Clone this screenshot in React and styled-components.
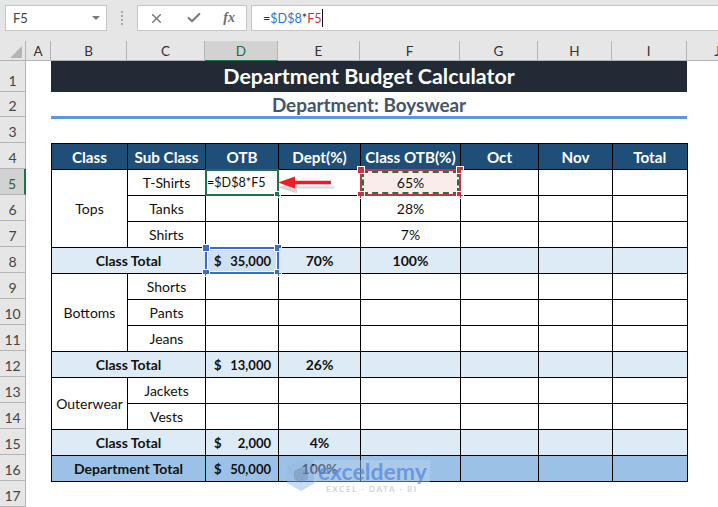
import React from "react";
import styled, { createGlobalStyle } from "styled-components";
import { X, Check } from "lucide-react";

const Global = createGlobalStyle`
  html, body { margin: 0; padding: 0; background: #fff; }
  body { font-family: Lato, "Open Sans", sans-serif; }
`;

const Page = styled.div`
  width: 718px;
  height: 507px;
  overflow: hidden;
  position: relative;
  background: #fff;
`;

const Toolbar = styled.div`
  height: 41px;
  background: #e6e6e6;
  display: flex;
  align-items: flex-start;
  padding-top: 5px;
  box-sizing: border-box;
`;

const NameBox = styled.div`
  width: 102px;
  height: 26px;
  margin-left: 5px;
  box-sizing: border-box;
  background: #fff;
  border: 1px solid #c6c6c6;
  display: flex;
  align-items: center;
  justify-content: space-between;
  padding: 0 6px 0 7px;
  font-size: 13px;
  color: #444;
`;

const Caret = styled.span`
  width: 0;
  height: 0;
  border-left: 4px solid transparent;
  border-right: 4px solid transparent;
  border-top: 4px solid #7a7a7a;
`;

const Grip = styled.div`
  width: 30px;
  height: 26px;
  display: flex;
  flex-direction: column;
  align-items: center;
  justify-content: center;
  gap: 2px;
  span { width: 2px; height: 2px; background: #a8a8a8; }
`;

const FxBox = styled.div`
  width: 110px;
  height: 26px;
  box-sizing: border-box;
  background: #fff;
  border: 1px solid #c6c6c6;
  display: flex;
  align-items: center;
  justify-content: space-between;
  padding: 0 11px 0 11px;
  color: #7d7d7d;
`;

const FxLabel = styled.span`
  font-family: "Liberation Serif", serif;
  font-style: italic;
  font-weight: bold;
  font-size: 14px;
  color: #6e6e6e;
`;

const FormulaBar = styled.div`
  flex: 1;
  height: 26px;
  margin-left: 4px;
  box-sizing: border-box;
  background: #fff;
  border: 1px solid #c6c6c6;
  border-right: none;
  display: flex;
  align-items: center;
  padding-left: 11px;
  font-size: 12.6px;
  color: #333;
`;

const Ref = styled.span`
  color: ${(p) => p.$color};
`;

const TextCaret = styled.span`
  width: 1px;
  height: 18px;
  background: #111;
`;

const ColumnBar = styled.div`
  height: 20px;
  background: #e6e6e6;
  display: flex;
  box-sizing: border-box;
  border-bottom: 1px solid #b4b4b4;
`;

const Corner = styled.div`
  flex: none;
  width: 26px;
  display: flex;
  align-items: flex-end;
  justify-content: flex-end;
  padding: 0 3px 2px 0;
  box-sizing: border-box;
  border-right: 1px solid #b4b4b4;
  svg { display: block; }
`;

const ColHead = styled.div`
  flex: none;
  width: ${(p) => p.$w}px;
  box-sizing: border-box;
  display: flex;
  align-items: center;
  justify-content: center;
  font-size: 13.5px;
  color: ${(p) => (p.$on ? "#1f6b41" : "#333")};
  background: ${(p) => (p.$on ? "#d2d2d2" : "transparent")};
  border-right: 1px solid #b4b4b4;
  box-shadow: ${(p) => (p.$on ? "0 1px 0 #217346" : "none")};
`;

const Body = styled.div`
  display: flex;
`;

const RowRail = styled.div`
  width: 26px;
  flex: none;
  background: #e6e6e6;
  border-right: 1px solid #b4b4b4;
  box-sizing: border-box;
`;

const RowHead = styled.div`
  height: ${(p) => p.$h}px;
  box-sizing: border-box;
  display: flex;
  align-items: flex-end;
  justify-content: center;
  padding-bottom: 2px;
  font-size: 14px;
  line-height: 17px;
  color: ${(p) => (p.$on ? "#1f6b41" : "#444")};
  background: ${(p) => (p.$on ? "#d2d2d2" : "transparent")};
  border-bottom: 1px solid #b4b4b4;
  border-right: ${(p) => (p.$on ? "2px solid #217346" : "none")};
  margin-right: ${(p) => (p.$on ? "-1px" : "0")};
`;

const Canvas = styled.div`
  padding-left: 25px;
  width: 636px;
`;

const Title = styled.div`
  height: 31px;
  box-sizing: border-box;
  padding-bottom: 2px;
  background: #222b35;
  color: #fff;
  font-weight: 700;
  font-size: 21.4px;
  display: flex;
  align-items: center;
  justify-content: center;
`;

const Subtitle = styled.div`
  height: 27px;
  box-sizing: border-box;
  border-bottom: 3px solid #5b9bd5;
  color: #44546a;
  font-weight: 700;
  font-size: 18.9px;
  display: flex;
  align-items: center;
  justify-content: center;
`;

const Budget = styled.table`
  margin-top: 24px;
  border-collapse: collapse;
  table-layout: fixed;
  width: 635px;
  font-size: 14px;
  color: #111;
  td, th {
    border: 1px solid #000;
    height: 26px;
    padding: 0;
    box-sizing: border-box;
    text-align: center;
    position: relative;
  }
`;

const HeadCell = styled.th`
  background: #1f4e78;
  color: #fff;
  font-weight: 700;
  font-size: 15.2px;
`;

const Cell = styled.td`
  background: ${(p) => p.$bg || "#fff"};
  font-weight: ${(p) => (p.$bold ? 700 : 400)};
`;

const Money = styled.div`
  display: flex;
  justify-content: space-between;
  padding: 0 7px 0 8px;
  font-weight: 700;
  font-size: 13px;
`;

const EditText = styled.div`
  text-align: left;
  padding-left: 1px;
  font-size: 12.6px;
`;

const ActiveFrame = styled.div`
  position: absolute;
  inset: -1px;
  border: 2px solid #217346;
  pointer-events: none;
`;

const RangeFrame = styled.div`
  position: absolute;
  inset: -1px;
  border: 2px solid ${(p) => p.$color};
  outline: ${(p) => (p.$dashed ? "none" : "1px solid #fff")};
  outline-offset: -3px;
  pointer-events: none;
`;

const Ants = styled.div`
  position: absolute;
  inset: 0;
  border: 2px dashed #217346;
  pointer-events: none;
`;

const Handle = styled.span`
  position: absolute;
  width: 6px;
  height: 6px;
  background: ${(p) => p.$color};
  border: 1px solid #fff;
  ${(p) => (p.$top ? "top: -5px;" : "bottom: -5px;")}
  ${(p) => (p.$left ? "left: -5px;" : "right: -5px;")}
`;

const FillDot = styled.span`
  position: absolute;
  right: -4px;
  bottom: -4px;
  width: 5px;
  height: 5px;
  background: #217346;
  border: 1px solid #fff;
`;

const Arrow = styled.svg`
  position: absolute;
  left: 275px;
  top: 173px;
  overflow: visible;
`;

const Watermark = styled.div`
  position: absolute;
  left: 287px;
  top: 459px;
  display: flex;
  align-items: flex-start;
  pointer-events: none;
`;

const MarkWords = styled.div`
  margin-left: -1px;
  display: flex;
  flex-direction: column;
  align-items: center;
`;

const MarkName = styled.div`
  background: rgba(190, 212, 240, 0.45);
  color: rgba(80, 135, 215, 0.72);
  font-size: 23px;
  font-weight: 700;
  line-height: 22px;
  height: 22px;
  padding: 0 3px 0 4px;
  box-sizing: border-box;
  margin-top: 1px;
  white-space: nowrap;
`;

const MarkTag = styled.div`
  color: rgba(170, 180, 195, 0.6);
  font-size: 8px;
  font-weight: 700;
  letter-spacing: 1.65px;
  margin-top: 2px;
  white-space: nowrap;
`;

const columns = [
  ["A", 25], ["B", 76], ["C", 78], ["D", 73], ["E", 82],
  ["F", 100], ["G", 78], ["H", 74], ["I", 74.5], ["J", 62],
];

const rowHeights = [31, 25, 26, 26, 26, 26, 26, 26, 26, 26, 26, 26, 26, 26, 26, 26, 26];

const TOTAL = "#ddebf7";
const DEPT = "#9bc2e6";

const Handles = ({ color }) => (
  <>
    <Handle $color={color} $top $left />
    <Handle $color={color} $top />
    <Handle $color={color} $left />
    <Handle $color={color} />
  </>
);

const Blank = ({ n, bg }) =>
  Array.from({ length: n }, (_, i) => <Cell key={i} $bg={bg} />);

const Amount = ({ value }) => (
  <Money>
    <span>$</span>
    <span>{value}</span>
  </Money>
);

const TotalRow = ({ label, amount, dept, bg = TOTAL, selected }) => (
  <tr>
    <Cell colSpan={2} $bg={bg} $bold>{label}</Cell>
    <Cell $bg={selected ? "#cfe0f2" : bg}>
      <Amount value={amount} />
      {selected && (
        <RangeFrame $color="#3a6fc4">
          <Handles color="#3a6fc4" />
        </RangeFrame>
      )}
    </Cell>
    <Cell $bg={bg} $bold>{dept}</Cell>
    <Cell $bg={bg} $bold>{selected ? "100%" : ""}</Cell>
    <Blank n={3} bg={bg} />
  </tr>
);

const SubRow = ({ group, span, name, share }) => (
  <tr>
    {group && <Cell rowSpan={span}>{group}</Cell>}
    <Cell>{name}</Cell>
    <Blank n={2} />
    <Cell>{share}</Cell>
    <Blank n={3} />
  </tr>
);

export default function App() {
  return (
    <Page>
      <Global />
      <Toolbar>
        <NameBox>F5<Caret /></NameBox>
        <Grip><span /><span /><span /><span /></Grip>
        <FxBox>
          <X size={15} strokeWidth={2.6} />
          <Check size={16} strokeWidth={3.2} />
          <FxLabel>fx</FxLabel>
        </FxBox>
        <FormulaBar>
          =<Ref $color="#2f75c9">$D$8</Ref>*<Ref $color="#c2373f">F5</Ref>
          <TextCaret />
        </FormulaBar>
      </Toolbar>

      <ColumnBar>
        <Corner>
          <svg width="12" height="12" viewBox="0 0 12 12">
            <path d="M12 0V12H0Z" fill="#b5b5b5" />
          </svg>
        </Corner>
        {columns.map(([name, w]) => (
          <ColHead key={name} $w={w} $on={name === "D"}>{name}</ColHead>
        ))}
      </ColumnBar>

      <Body>
        <RowRail>
          {rowHeights.map((h, i) => (
            <RowHead key={i} $h={h} $on={i === 4}>{i + 1}</RowHead>
          ))}
        </RowRail>
        <Canvas>
          <Title>Department Budget Calculator</Title>
          <Subtitle>Department: Boyswear</Subtitle>
          <Budget>
            <colgroup>
              {columns.slice(1, 9).map(([name, w]) => <col key={name} style={{ width: w }} />)}
            </colgroup>
            <tbody>
              <tr>
                {["Class", "Sub Class", "OTB", "Dept(%)", "Class OTB(%)", "Oct", "Nov", "Total"].map((h) => (
                  <HeadCell key={h}>{h}</HeadCell>
                ))}
              </tr>
              <tr>
                <Cell rowSpan={3}>Tops</Cell>
                <Cell>T-Shirts</Cell>
                <Cell>
                  <EditText>=$D$8*F5</EditText>
                  <ActiveFrame><FillDot /></ActiveFrame>
                </Cell>
                <Cell />
                <Cell $bg="#f9ecea">
                  65%
                  <RangeFrame $color="#c2373f" $dashed>
                    <Ants />
                    <Handles color="#c2373f" />
                  </RangeFrame>
                </Cell>
                <Blank n={3} />
              </tr>
              <SubRow name="Tanks" share="28%" />
              <SubRow name="Shirts" share="7%" />
              <TotalRow label="Class Total" amount="35,000" dept="70%" selected />
              <SubRow group="Bottoms" span={3} name="Shorts" />
              <SubRow name="Pants" />
              <SubRow name="Jeans" />
              <TotalRow label="Class Total" amount="13,000" dept="26%" />
              <SubRow group="Outerwear" span={2} name="Jackets" />
              <SubRow name="Vests" />
              <TotalRow label="Class Total" amount="2,000" dept="4%" />
              <TotalRow label="Department Total" amount="50,000" dept="100%" bg={DEPT} />
            </tbody>
          </Budget>
        </Canvas>
      </Body>

      <Arrow width="58" height="20" viewBox="0 0 58 20">
        <path d="M58 12.5H20M20 8V17L5 12.5Z" fill="#9a9a9a" stroke="#9a9a9a" strokeWidth="2" opacity="0.4" transform="translate(1 2)" />
        <path d="M56 9.5H18" stroke="#ee1c25" strokeWidth="3.4" />
        <path d="M3 9.5L20 3.5V15.5Z" fill="#ee1c25" />
      </Arrow>

      <Watermark>
        <svg width="28" height="32" viewBox="0 0 28 32">
          <path d="M14 0L28 8V24L14 32L0 24V8Z" fill="rgba(150,185,230,0.5)" />
          <path d="M14 8L21 12V20L14 24L7 20V12Z" fill="rgba(110,130,160,0.4)" />
        </svg>
        <MarkWords>
          <MarkName>exceldemy</MarkName>
          <MarkTag>EXCEL · DATA · BI</MarkTag>
        </MarkWords>
      </Watermark>
    </Page>
  );
}
